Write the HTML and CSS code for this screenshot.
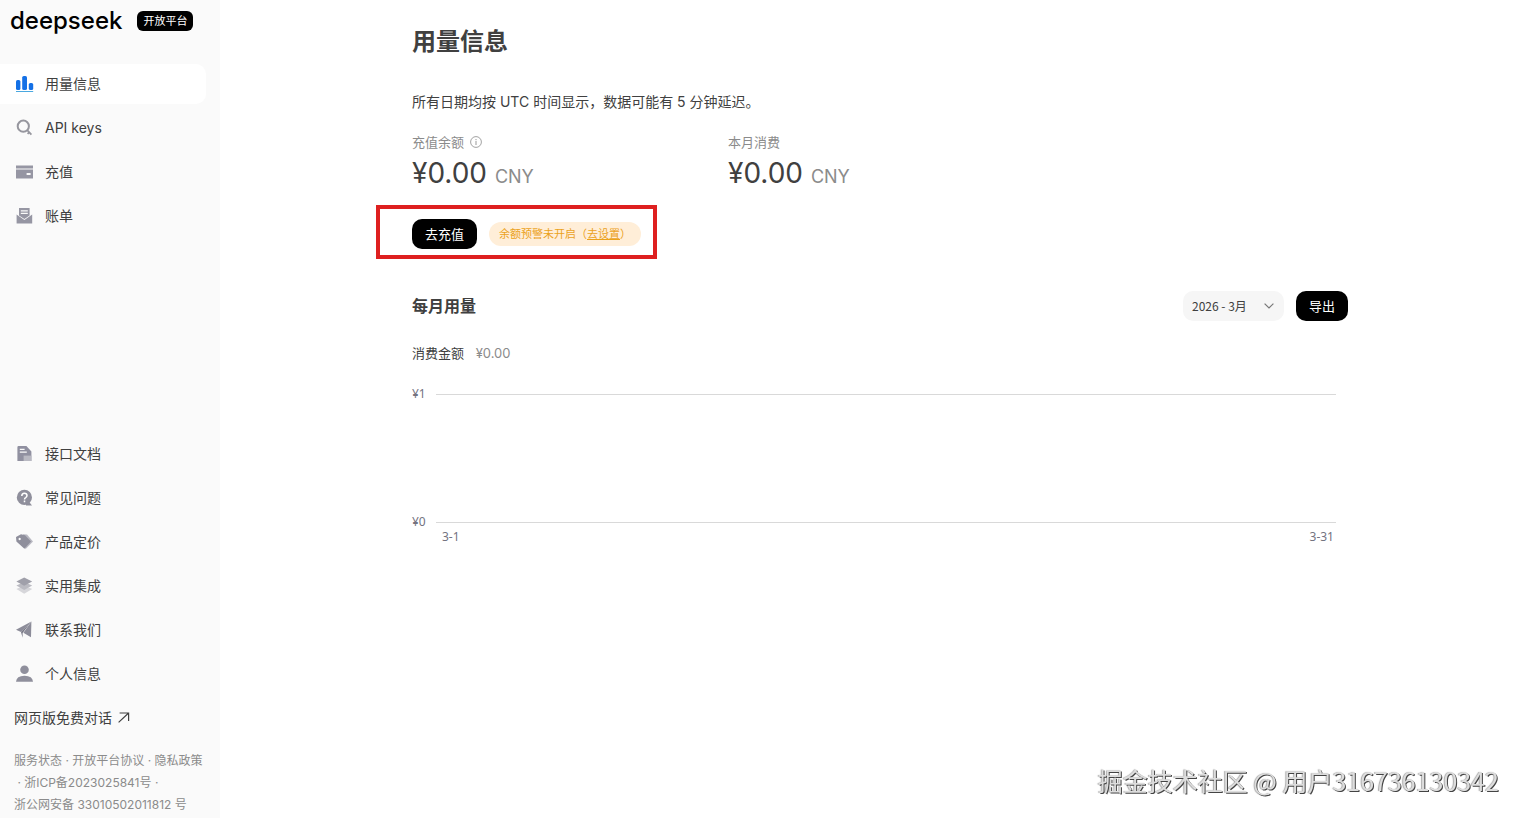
FILE: index.html
```html
<!DOCTYPE html>
<html lang="zh-CN">
<head>
  <meta charset="UTF-8" />
  <meta name="viewport" content="width=device-width, initial-scale=1.0"/>
  <title>DeepSeek 开放平台</title>
  <link rel="stylesheet" href="styles.css">
</head>
<body>

<div class="app">

  <aside class="sidebar">
    <div class="brand">
      <span class="logo">deepseek</span>
      <span class="tag">开放平台</span>
    </div>

    <nav class="nav">
      <a class="nav-item active" href="#">
        <svg class="icon" viewBox="0 0 18 18"><g fill="#1470e6"><rect x="0" y="5" width="4.4" height="10" rx="1.6"/><rect x="6.2" y="1" width="4.8" height="14" rx="1.6"/><rect x="12.8" y="8" width="4.4" height="7" rx="1.6"/></g><path d="M0 16.5h17.2" stroke="#4aa8e0"/></svg>
        <span>用量信息</span>
      </a>
      <a class="nav-item" href="#">
        <svg class="icon" viewBox="0 0 18 18" fill="none" stroke="#96969e" stroke-width="2"><circle cx="7.3" cy="7.2" r="5.6"/><path d="M11.2 11.2l4.2 4.4M11.6 14.8l2-2" stroke-width="1.8"/></svg>
        <span>API keys</span>
      </a>
      <a class="nav-item" href="#">
        <svg class="icon" viewBox="0 0 18 18"><path fill="#9696a3" d="M0 2.5h17v3H0z"/><path fill="#9696a3" fill-rule="evenodd" d="M0 6.5h17V15.4H0zM10.6 10v2h4v-2z"/></svg>
        <span>充值</span>
      </a>
      <a class="nav-item" href="#">
        <svg class="icon" viewBox="0 0 18 18"><path fill="#9696a3" fill-rule="evenodd" d="M3 1h10.6v7.4L8.4 12 3 8.6zM4.8 3.2v1.2h7V3.2zM4.8 5.8V7h7V5.8z"/><path fill="#9696a3" d="M.6 7.6l7.8 5.5 7.8-5.5v8.8H.6z"/></svg>
        <span>账单</span>
      </a>
    </nav>

    <nav class="nav nav-bottom">
      <a class="nav-item" href="#">
        <svg class="icon" viewBox="0 0 18 18"><path fill="#9090a0" fill-rule="evenodd" d="M2.6 1h7.8l5 5.4V16h-14V2.2q0-1.2 1.2-1.2zM3.8 3.8V5h4.8V3.8zM3.8 6.6v1.2h7V6.6z"/><path fill="#b9b9c2" d="M7.6 10.6h7.8V16H7.6z"/></svg>
        <span>接口文档</span>
      </a>
      <a class="nav-item" href="#">
        <svg class="icon" viewBox="0 0 18 18"><circle cx="8.4" cy="8.4" r="7.6" fill="#8f8f9c"/><path fill="#8f8f9c" d="M10 14h4l2 2.4h-6z"/><path d="M5.8 7q0-2.8 2.6-2.8T11 6.6q0 1.3-1.3 2-1.2.6-1.2 1.8M8.5 11.6v1.6" fill="none" stroke="#fff" stroke-width="1.5"/></svg>
        <span>常见问题</span>
      </a>
      <a class="nav-item" href="#">
        <svg class="icon" viewBox="0 0 18 18"><path fill="#b9b9c2" d="M7 1.2l4 .4 6 6.8-7.6 7.8z"/><path fill="#8f8f9c" fill-rule="evenodd" d="M0 4L5 1.2l4 1 6 6.4-6.6 7.2L.4 8.6zM3.6 4.8a1.2 1.2 0 1 0 .1 0z"/></svg>
        <span>产品定价</span>
      </a>
      <a class="nav-item" href="#">
        <svg class="icon" viewBox="0 0 18 18"><path fill="#d6d6da" d="M.4 12l7.8-3.4 8 3.4-8 4.8z"/><path fill="#bbbbc2" d="M.4 8.4L8.2 5l8 3.4-8 4.6z"/><path fill="#a0a0aa" d="M.4 4.4L8.2.4l8 4-8 4.4z"/></svg>
        <span>实用集成</span>
      </a>
      <a class="nav-item" href="#">
        <svg class="icon" viewBox="0 0 18 18"><path fill="#8c8c99" d="M15.4.6L0 8.8l5 2.2z"/><path fill="#777785" d="M5 11L15.4.6 6.6 12v4.8z"/><path fill="#8c8c99" d="M15.4.6L7.4 11.8l7.6 4.4z"/></svg>
        <span>联系我们</span>
      </a>
      <a class="nav-item" href="#">
        <svg class="icon" viewBox="0 0 18 18" fill="#8f8f9c"><circle cx="8.5" cy="4.8" r="4.3"/><path d="M0 16.8q.4-6 8.5-6t8.5 6z"/></svg>
        <span>个人信息</span>
      </a>
    </nav>

    <a class="chat-link" href="#">网页版免费对话
      <svg class="arrow" viewBox="0 0 12 12" fill="none" stroke="#404040" stroke-width="1.2"><path d="M.6 10.4L10.6 1M1.6 1h9v8"/></svg>
    </a>

    <footer class="legal">
      <div><a href="#">服务状态</a> · <a href="#">开放平台协议</a> · <a href="#">隐私政策</a></div>
      <div>&nbsp;· <a href="#">浙ICP备2023025841号</a> ·</div>
      <div><a href="#">浙公网安备 33010502011812 号</a></div>
    </footer>
  </aside>

  <main class="main">
    <div class="content">
      <h1>用量信息</h1>
      <p class="note">所有日期均按 UTC 时间显示，数据可能有 5 分钟延迟。</p>

      <section class="stats">
        <div>
          <div class="stat-label">充值余额
            <svg class="info" viewBox="0 0 12 12" fill="none" stroke="#999"><circle cx="6" cy="6" r="5.4" stroke-width=".9"/><path d="M6 5v4M6 3v1.2"/></svg>
          </div>
          <div class="amount">¥0.00 <span>CNY</span></div>
        </div>
        <div>
          <div class="stat-label">本月消费</div>
          <div class="amount">¥0.00 <span>CNY</span></div>
        </div>
      </section>

      <div class="actions">
        <button class="button">去充值</button>
        <div class="warning">余额预警未开启（<a href="#">去设置</a>）</div>
      </div>

      <section class="usage">
        <div class="usage-head">
          <h2>每月用量</h2>
          <div class="month">
            <select aria-label="月份">
              <option>2026 - 3月</option>
            </select>
            <svg class="chevron" viewBox="0 0 10 6" fill="none" stroke="#777" stroke-width="1.2"><path d="M.6.6L5 5 9.4.6"/></svg>
          </div>
          <button class="button">导出</button>
        </div>

        <div class="cost">消费金额 <span>¥0.00</span></div>

        <div class="chart">
          <div class="chart-row"><span>¥1</span><i></i></div>
          <div class="chart-row"><span>¥0</span><i></i></div>
        </div>
        <div class="chart-x"><span>3-1</span><span>3-31</span></div>
      </section>
    </div>
  </main>

</div>

<div class="watermark">掘金技术社区 @ 用户316736130342</div>

</body>
</html>
```
FILE: styles.css
```css
* {
  box-sizing: border-box;
}
body {
  margin: 0;
  font-family: Inter, "Noto Sans CJK SC", sans-serif;
  font-size: 14px;
  color: #404040;
  background: #fff;
}
a {
  color: inherit;
  text-decoration: none;
}
h1, h2, p {
  margin: 0;
}
.app {
  display: flex;
  min-height: 100vh;
}

/* sidebar */
.sidebar {
  width: 220px;
  flex-shrink: 0;
  display: flex;
  flex-direction: column;
  padding-bottom: 2px;
  background: #fafafa;
}
.brand {
  display: flex;
  align-items: center;
  gap: 15px;
  height: 42px;
  margin-bottom: 22px;
  padding-left: 10px;
}
.logo {
  font-size: 24px;
  line-height: 40px;
  font-weight: 500;
  color: #000;
}
.tag {
  padding: 0 6px;
  border-radius: 6px;
  font-size: 11px;
  line-height: 20px;
  color: #fff;
  background: #000;
}
.nav {
  display: flex;
  flex-direction: column;
  gap: 4px;
}
.nav-bottom {
  margin-top: auto;
}
.nav-item {
  display: flex;
  align-items: center;
  gap: 11px;
  height: 40px;
  margin-right: 14px;
  padding-left: 16px;
  border-radius: 0 10px 10px 0;
}
.nav-item.active {
  background: #fff;
}
.nav-item span {
  padding-bottom: 2px;
}
.icon {
  width: 18px;
  height: 18px;
}
.chat-link {
  display: flex;
  align-items: center;
  gap: 6px;
  margin: 4px 0 12px;
  padding-left: 14px;
  line-height: 40px;
}
.arrow {
  width: 12px;
  height: 12px;
}
.legal {
  padding-left: 14px;
  font-size: 12px;
  line-height: 22px;
  white-space: nowrap;
  color: #8b8b8b;
}

/* usage page */
.main {
  flex: 1;
  padding: 24px 0 24px 18px;
}
.content {
  max-width: 936px;
  margin: 0 auto;
}
h1 {
  font-size: 24px;
  line-height: 36px;
}
.note {
  margin-top: 30px;
  line-height: 24px;
}
.stats {
  display: grid;
  grid-template-columns: repeat(3, 1fr);
  gap: 12px;
  margin-top: 18px;
}
.stat-label {
  display: flex;
  align-items: center;
  gap: 6px;
  font-size: 13px;
  line-height: 20px;
  color: #8b8b8b;
}
.info {
  width: 12px;
  height: 12px;
}
.amount {
  font-size: 28px;
  line-height: 42px;
}
.amount span {
  font-size: 18px;
  color: #8b8b8b;
}
.actions {
  position: relative;
  display: flex;
  align-items: center;
  gap: 12px;
  width: fit-content;
  margin-top: 21px;
}
/* highlight frame round the top-up actions */
.actions::after {
  content: "";
  position: absolute;
  inset: -14px -16px -10px -36px;
  border: 4px solid #de2020;
  pointer-events: none;
}
.button {
  height: 30px;
  padding: 0 13px;
  border: none;
  border-radius: 10px;
  font-family: inherit;
  font-size: 13px;
  line-height: 28px;
  color: #fff;
  background: #000;
  cursor: pointer;
}
.warning {
  padding: 0 10px;
  border-radius: 12px;
  font-size: 11px;
  line-height: 24px;
  color: #eba21c;
  background: #ffeed8;
}
.warning a {
  text-decoration: underline;
}
.usage {
  margin-top: 42px;
}
.usage-head {
  display: flex;
  align-items: center;
  gap: 12px;
}
h2 {
  flex: 1;
  font-size: 16px;
  line-height: 24px;
}
.month {
  position: relative;
}
.month select {
  appearance: none;
  display: block;
  width: 101px;
  height: 30px;
  padding: 0 9px 2px;
  border: none;
  border-radius: 10px;
  font-family: "Noto Sans CJK SC", sans-serif;
  font-size: 12px;
  color: #404040;
  background: #f6f6f6;
}
.chevron {
  position: absolute;
  right: 10px;
  top: 12px;
  width: 10px;
  height: 6px;
  pointer-events: none;
}
.cost {
  margin-top: 22px;
  font-size: 13px;
  line-height: 20px;
}
.cost span {
  margin-left: 8px;
  color: #8b8b8b;
}
.chart {
  display: grid;
  gap: 108px;
  margin-top: 21px;
}
.chart,
.chart-x {
  padding-right: 12px;
  font-family: "Noto Sans", sans-serif;
  font-size: 12px;
  line-height: 20px;
  color: #73737f;
}
.chart-row {
  display: flex;
  align-items: center;
}
.chart-row span {
  width: 24px;
}
.chart-row i {
  flex: 1;
  height: 1px;
  background: #d9d9d9;
}
.chart-x {
  display: flex;
  justify-content: space-between;
  margin-top: -5px;
  padding: 0 14px 0 30px;
}

.watermark {
  position: fixed;
  right: 23px;
  bottom: 19px;
  font-family: "Noto Sans CJK SC", sans-serif;
  font-size: 25px;
  line-height: 38px;
  color: #ddd;
  text-shadow: 1px 1px 0 #444, -1px 0 1px #aaa;
}
```
